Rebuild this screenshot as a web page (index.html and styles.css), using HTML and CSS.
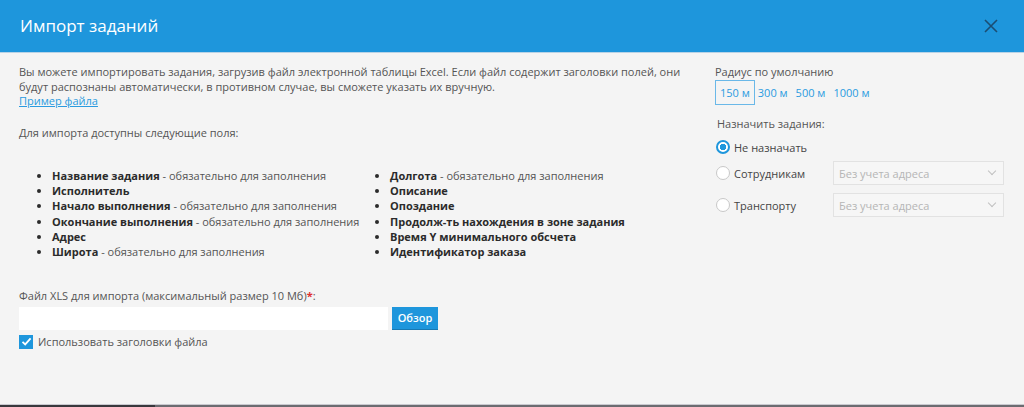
FILE: index.html
```html
<!DOCTYPE html>
<html lang="ru">
<head>
    <meta charset="UTF-8">
    <title>Импорт заданий</title>
    <link rel="stylesheet" href="styles.css">
</head>
<body>
    <div class="modal">
        <div class="modal-header">
            <h1 class="modal-title">Импорт заданий</h1>
            <button class="close-btn" aria-label="Закрыть">
                <svg width="14" height="14" viewBox="0 0 14 14">
                    <path d="M1 1 L13 13 M13 1 L1 13" stroke="#1b4d72" stroke-width="1.6" fill="none"/>
                </svg>
            </button>
        </div>

        <div class="modal-body">
            <div class="col-main">
                <p class="intro">Вы можете импортировать задания, загрузив файл электронной таблицы Excel. Если файл содержит заголовки полей, они будут распознаны автоматически, в противном случае, вы сможете указать их вручную.</p>
                <a href="#" class="link">Пример файла</a>

                <p class="fields-title">Для импорта доступны следующие поля:</p>

                <div class="fields">
                    <ul class="field-list">
                        <li><b>Название задания</b> - обязательно для заполнения</li>
                        <li><b>Исполнитель</b></li>
                        <li><b>Начало выполнения</b> - обязательно для заполнения</li>
                        <li><b>Окончание выполнения</b> - обязательно для заполнения</li>
                        <li><b>Адрес</b></li>
                        <li><b>Широта</b> - обязательно для заполнения</li>
                    </ul>
                    <ul class="field-list">
                        <li><b>Долгота</b> - обязательно для заполнения</li>
                        <li><b>Описание</b></li>
                        <li><b>Опоздание</b></li>
                        <li><b>Продолж-ть нахождения в зоне задания</b></li>
                        <li><b>Время Y минимального обсчета</b></li>
                        <li><b>Идентификатор заказа</b></li>
                    </ul>
                </div>

                <label class="file-label">Файл XLS для импорта (максимальный размер 10 Мб)<span class="req">*</span>:</label>
                <div class="file-row">
                    <input type="text" class="file-input">
                    <button class="btn-browse">Обзор</button>
                </div>
                <label class="check">
                    <span class="check-box">
                        <svg width="13" height="13" viewBox="0 0 13 13">
                            <path d="M2.5 6.8 L5.2 9.4 L10.6 3.4" stroke="#fff" stroke-width="1.8" fill="none"/>
                        </svg>
                    </span>
                    Использовать заголовки файла
                </label>
            </div>

            <div class="col-side">
                <div class="side-label">Радиус по умолчанию</div>
                <div class="radius">
                    <a href="#" class="radius-item active">150 м</a>
                    <a href="#" class="radius-item">300 м</a>
                    <a href="#" class="radius-item">500 м</a>
                    <a href="#" class="radius-item">1000 м</a>
                </div>

                <div class="side-label assign">Назначить задания:</div>
                <div class="assign-row first">
                    <label class="radio"><span class="radio-dot checked"></span>Не назначать</label>
                </div>
                <div class="assign-row">
                    <label class="radio"><span class="radio-dot"></span>Сотрудникам</label>
                    <div class="select">Без учета адреса<span class="caret"></span></div>
                </div>
                <div class="assign-row">
                    <label class="radio"><span class="radio-dot"></span>Транспорту</label>
                    <div class="select">Без учета адреса<span class="caret"></span></div>
                </div>
            </div>
        </div>
    </div>
    <div class="bottom-bar"><div class="bottom-thumb"></div></div>
</body>
</html>
```

FILE: styles.css
```css
:root {
    --blue: #1e96dc;
    --link: #2a9be0;
    --bg: #f4f4f4;
    --text: #555555;
    --strong: #2b2b2b;
}

* {
    margin: 0;
    padding: 0;
    box-sizing: border-box;
}

html, body {
    height: 100%;
}

body {
    font-family: "Open Sans", "Liberation Sans", sans-serif;
    font-size: 11px;
    color: var(--text);
    background-color: var(--bg);
    display: flex;
    flex-direction: column;
    overflow: hidden;
}

.modal {
    flex: 1;
}

.modal-header {
    height: 53px;
    background-color: var(--blue);
    border-bottom: 1px solid #b9d3e6;
    display: flex;
    align-items: center;
    justify-content: space-between;
    padding: 0 26px 0 20px;
}

.modal-title {
    font-size: 17px;
    font-weight: normal;
    color: #ffffff;
    margin-top: -1px;
}

.close-btn {
    background: none;
    border: none;
    cursor: pointer;
    display: flex;
}

.modal-body {
    display: flex;
    padding: 12px 20px 0 19px;
}

.col-main {
    width: 696px;
    line-height: 14.5px;
}

.intro {
    padding-right: 24px;
}

.link {
    color: var(--link);
    text-decoration: underline;
}

.fields-title {
    margin-top: 17px;
}

.fields {
    display: flex;
    margin-top: 28px;
    line-height: 15.2px;
}

.field-list {
    padding-left: 33px;
    width: 371px;
}

.field-list + .field-list {
    padding-left: 0;
    width: auto;
}

.field-list li {
    list-style: disc;
    color: var(--text);
}

.field-list li::marker {
    color: var(--strong);
}

.field-list b {
    font-weight: 700;
    color: var(--strong);
}

.file-label {
    display: block;
    margin-top: 30px;
}

.req {
    color: #e03030;
    font-weight: bold;
}

.file-row {
    display: flex;
    margin-top: 3px;
    gap: 4px;
}

.file-input {
    width: 369px;
    height: 23px;
    border: none;
    background-color: #ffffff;
    outline: none;
}

.btn-browse {
    height: 23px;
    width: 46px;
    background-color: var(--blue);
    color: #ffffff;
    border: none;
    border-bottom: 1px solid #1879b3;
    font-family: inherit;
    font-size: 11px;
    font-weight: 600;
    cursor: pointer;
}

.check {
    display: flex;
    align-items: center;
    gap: 5px;
    margin-top: 5px;
}

.check-box {
    width: 14px;
    height: 14px;
    background-color: var(--blue);
    display: flex;
    align-items: center;
    justify-content: center;
}

.col-side {
    flex: 1;
    line-height: 15px;
}

.side-label {
    margin-top: -1px;
}

.side-label.assign {
    margin-top: 11px;
    padding-left: 2px;
}

.radius {
    display: flex;
    gap: 6px;
    margin-top: 1px;
}

.radius-item {
    color: var(--link);
    text-decoration: none;
    padding: 4px 0;
    border: 1px solid transparent;
}

.radius-item.active {
    border-color: #6ab8e8;
    padding: 4px 4px;
    margin-right: -4px;
}

.assign-row {
    display: flex;
    align-items: center;
    height: 32px;
    padding-left: 1px;
}

.assign-row.first {
    height: 24px;
    margin-top: 4px;
    margin-bottom: -2px;
}

.radio {
    display: flex;
    align-items: center;
    gap: 4px;
    width: 117px;
    color: #444;
}

.radio-dot {
    width: 14px;
    height: 14px;
    border-radius: 50%;
    border: 1px solid #c8c8c8;
    background-color: #ffffff;
}

.radio-dot.checked {
    border: 2px solid var(--blue);
    background: radial-gradient(circle, var(--blue) 0 3px, #ffffff 3.5px);
}

.select {
    flex: 1;
    height: 24px;
    border: 1px solid #e2e2e2;
    background-color: #f6f6f6;
    color: #b5b5b5;
    display: flex;
    align-items: center;
    justify-content: space-between;
    padding: 0 8px 0 5px;
}

.caret {
    width: 6px;
    height: 6px;
    border-right: 1px solid #c0c0c0;
    border-bottom: 1px solid #c0c0c0;
    transform: rotate(45deg);
    margin-top: -4px;
}

.bottom-bar {
    height: 3px;
    border-top: 1px solid #c9c9cf;
    background-color: #6b6b70;
}

.bottom-thumb {
    width: 155px;
    height: 2px;
    background-color: #38383c;
}
```
